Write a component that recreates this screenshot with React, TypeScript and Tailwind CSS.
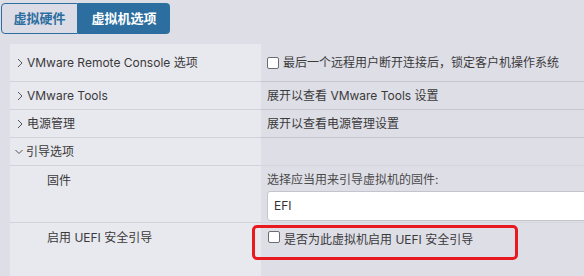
import React from "react";

const font = { fontFamily: 'Inter, "Noto Sans CJK SC", sans-serif' };

function Chevron({ open }: { open?: boolean }) {
  return (
    <svg width="8" height="10" viewBox="0 0 8 10" className="mr-[3px] shrink-0">
      {open ? (
        <path d="M0.5 3 L4 6.5 L7.5 3" fill="none" stroke="#555" strokeWidth="1" />
      ) : (
        <path d="M2 1 L6 5 L2 9" fill="none" stroke="#555" strokeWidth="1" />
      )}
    </svg>
  );
}

function Box() {
  return <span className="inline-block w-[12px] h-[12px] rounded-[2px] border border-[#6b6b72] bg-white mr-[4px] shrink-0" />;
}

export default function App() {
  return (
    <div className="w-[584px] h-[276px] overflow-hidden bg-[#dedee7] text-[12px] text-[#3a3a3a] relative" style={font}>
      <div className="pt-[3px] pl-[1px] flex">
        <div className="h-[31px] w-[77px] flex items-center justify-center rounded-l-[4px] border border-[#2b6e9f] bg-[#dcdce6] text-[#2b6e9f] text-[13px] font-bold">
          虚拟硬件
        </div>
        <div className="h-[31px] w-[92px] flex items-center justify-center rounded-r-[4px] bg-[#2b6e9f] text-white text-[13px] font-bold">
          虚拟机选项
        </div>
      </div>
      <div className="ml-[10px] mt-[10px] w-[600px] grid grid-cols-[251px_1fr]">
        {/* row 1 */}
        <div className="h-[38px] bg-[#e8e8ef] border-b border-[#d2d2da] flex items-center pl-[6px]">
          <Chevron />VMware Remote Console 选项
        </div>
        <div className="h-[38px] border-b border-[#c6c6ce] flex items-center pl-[6px]">
          <Box />最后一个远程用户断开连接后，锁定客户机操作系统
        </div>
        {/* row 2 */}
        <div className="h-[28px] bg-[#e8e8ef] border-b border-[#d2d2da] flex items-center pl-[6px]">
          <Chevron />VMware Tools
        </div>
        <div className="h-[28px] border-b border-[#c6c6ce] flex items-center pl-[6px]">
          展开以查看 VMware Tools 设置
        </div>
        {/* row 3 */}
        <div className="h-[28px] bg-[#e8e8ef] border-b border-[#d2d2da] flex items-center pl-[6px]">
          <Chevron />电源管理
        </div>
        <div className="h-[28px] border-b border-[#c6c6ce] flex items-center pl-[6px]">
          展开以查看电源管理设置
        </div>
        {/* row 4 */}
        <div className="h-[28px] bg-[#e8e8ef] border-b border-[#d2d2da] flex items-center pl-[5px]">
          <Chevron open />引导选项
        </div>
        <div className="h-[28px] border-b border-[#d6d6de]" />
        {/* row 5 */}
        <div className="h-[57px] bg-[#e8e8ef] border-b border-[#d2d2da] pl-[37px] pt-[6px]">固件</div>
        <div className="h-[57px] border-b border-[#d6d6de] pl-[6px] pt-[6px] text-[#4a4a4a]">
          <div className="leading-[16px]">选择应当用来引导虚拟机的固件:</div>
          <div className="mt-[3px] h-[30px] bg-white border border-[#c4c4cc] rounded-l-[3px] flex items-center pl-[6px] text-[#333]">
            EFI
          </div>
        </div>
        {/* row 6 */}
        <div className="h-[60px] bg-[#e8e8ef] pl-[37px] pt-[6px]">启用 UEFI 安全引导</div>
        <div className="h-[60px] pl-[7px] pt-[8px] flex items-start">
          <Box />是否为此虚拟机启用 UEFI 安全引导
        </div>
      </div>
      <div className="absolute left-[252px] top-[225px] w-[266px] h-[35px] border-[3px] border-[#e81a1f] rounded-[5px]" />
    </div>
  );
}
